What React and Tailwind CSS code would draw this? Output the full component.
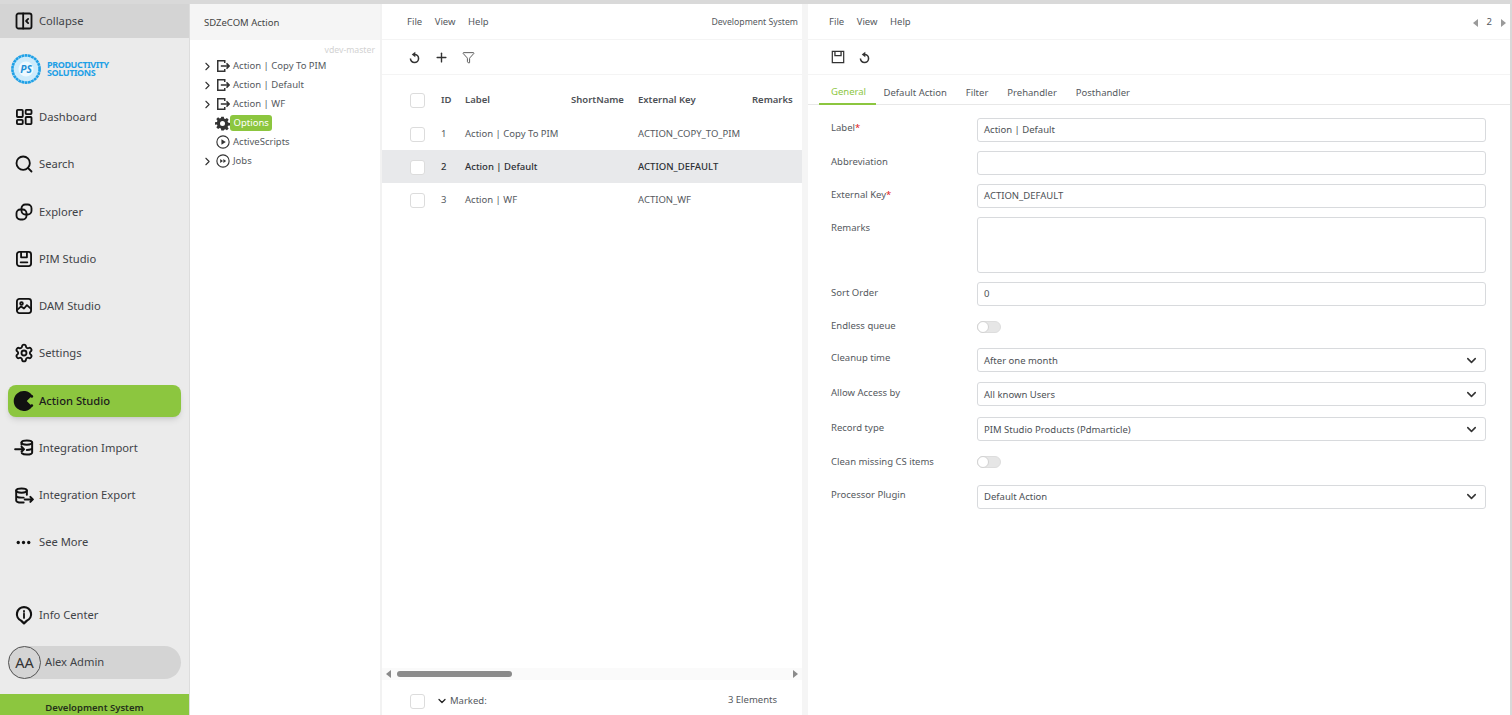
import { Search, Settings, Plus, Funnel, ChevronRight, ChevronDown } from 'lucide-react';

const Icon = ({ children, className = 'w-5 h-5' }) => (
    <svg viewBox="0 0 24 24" fill="none" stroke="currentColor" strokeWidth="2.2" strokeLinecap="round" strokeLinejoin="round" className={className}>
        {children}
    </svg>
);

const CollapseIcon = () => (
    <Icon>
        <rect x="3" y="3" width="18" height="18" rx="2.5" />
        <path d="M11 3v18M17 9.500 14.500 12l2.500 2.500" />
    </Icon>
);

const DashboardIcon = () => (
    <Icon>
        <rect x="3.500" y="3.500" width="7" height="8.500" rx="1" />
        <rect x="14" y="3.500" width="7" height="5" rx="1" />
        <rect x="3.500" y="15.500" width="7" height="5" rx="1" />
        <rect x="14" y="12" width="7" height="8.500" rx="1" />
    </Icon>
);

const ExplorerIcon = () => (
    <Icon>
        <rect x="9" y="3" width="12" height="12" rx="4.500" />
        <rect x="3" y="9" width="12" height="12" rx="4.500" />
    </Icon>
);

const PimIcon = () => (
    <Icon>
        <rect x="3.500" y="3.500" width="17" height="17" rx="3" />
        <path d="M8.500 3.500v6.500h7V3.500M8 16h8" />
    </Icon>
);

const DamIcon = () => (
    <Icon>
        <rect x="3.500" y="3.500" width="17" height="17" rx="3" />
        <circle cx="9" cy="9" r="1.600" />
        <path d="m3.500 17 5-4.500 3.500 2.500 3.500-4 5 4.500" />
    </Icon>
);

const PacmanIcon = () => (
    <svg viewBox="0 0 24 24" className="w-[22px] h-[22px]" fill="currentColor">
        <path d="M21 6A11 11 0 1 0 21 18L15 12Z" />
        <circle cx="20.500" cy="7" r="1.500" />
        <circle cx="20.500" cy="17" r="1.500" />
    </svg>
);

const ImportIcon = () => (
    <svg viewBox="0 0 28 24" fill="none" stroke="currentColor" strokeWidth="2.800" strokeLinecap="round" strokeLinejoin="round" className="w-[20px] h-[17px]">
        <ellipse cx="18" cy="5" rx="7.500" ry="3" />
        <path d="M10.500 5v3M25.500 5v14c0 1.700-3.400 3-7.500 3-3 0-5.800-.7-7-1.800M25.500 12.500c0 1.700-3.400 3-7.500 3" />
        <path d="M1.500 14.500H14M10.500 11l3.500 3.500-3.500 3.500" />
    </svg>
);

const ExportIcon = () => (
    <svg viewBox="0 0 28 24" fill="none" stroke="currentColor" strokeWidth="2.800" strokeLinecap="round" strokeLinejoin="round" className="w-[20px] h-[17px]">
        <ellipse cx="10.500" cy="5" rx="7.500" ry="3" />
        <path d="M3 5v14c0 1.700 3.400 3 7.500 3h3M18 5v6M3 12c0 1.700 3.400 3 7.500 3h3" />
        <path d="M15 17.500h11M23 14l3.500 3.500L23 21" />
    </svg>
);

const InfoIcon = () => (
    <svg viewBox="0 0 24 24" className="w-5 h-5" fill="none">
        <path d="M12 2.500a8.500 8.500 0 0 1 3.500 16.250L12 22l-3.500-3.250A8.500 8.500 0 0 1 12 2.500Z" stroke="currentColor" strokeWidth="2.600" strokeLinejoin="round" />
        <path d="M12 10.500v5M12 7v1.200" stroke="currentColor" strokeWidth="2.200" strokeLinecap="round" />
    </svg>
);

const DotsIcon = () => (
    <svg viewBox="0 0 20 6" className="w-[15px] h-[5px]" fill="currentColor">
        <circle cx="3" cy="3" r="2.200" />
        <circle cx="10" cy="3" r="2.200" />
        <circle cx="17" cy="3" r="2.200" />
    </svg>
);

const ExitBoxIcon = () => (
    <svg viewBox="0 0 16 16" fill="none" stroke="currentColor" strokeWidth="1.700" className="w-[14px] h-[14px]">
        <path d="M10 4.500V2H2v12h8v-2.500" />
        <path d="M5.500 8H15M12 5 15 8l-3 3" />
    </svg>
);

const GearIcon = () => (
    <svg viewBox="0 0 24 24" className="w-[15px] h-[15px]" fill="currentColor">
        <path fillRule="evenodd" d="M10 1h4l.6 3.100 1.900.8 2.600-1.800 2.800 2.800-1.800 2.600.8 1.900 3.100.6v4l-3.100.6-.8 1.900 1.800 2.600-2.800 2.800-2.600-1.800-1.900.8L14 23h-4l-.6-3.100-1.900-.8-2.600 1.800-2.800-2.800 1.800-2.600-.8-1.900L0 14v-4l3.100-.6.8-1.900L2.100 4.900l2.800-2.800 2.600 1.800 1.900-.8ZM12 8a4 4 0 1 0 0 8 4 4 0 0 0 0-8Z" />
    </svg>
);

const PlayCircleIcon = () => (
    <svg viewBox="0 0 16 16" className="w-[14px] h-[14px]">
        <circle cx="8" cy="8" r="7" fill="none" stroke="currentColor" strokeWidth="1.300" />
        <path d="M6.200 4.800v6.400L11.200 8Z" fill="currentColor" />
    </svg>
);

const ForwardCircleIcon = () => (
    <svg viewBox="0 0 16 16" className="w-[14px] h-[14px]">
        <circle cx="8" cy="8" r="7" fill="none" stroke="currentColor" strokeWidth="1.300" />
        <path d="M4.800 5.800v4.400L8 8ZM8.400 5.800v4.400L11.600 8Z" fill="currentColor" />
    </svg>
);

const SaveIcon = () => (
    <svg viewBox="0 0 16 16" fill="none" stroke="currentColor" strokeWidth="1.400" className="w-[14px] h-[14px]">
        <path d="M1.500 1.500h13v13h-13Z" />
        <path d="M4.500 1.500v5h7v-5" strokeWidth="1.500" />
    </svg>
);

const ReloadIcon = () => (
    <svg viewBox="0 0 16 16" className="w-[13px] h-[13px] text-[#333333]">
        <path d="M8 4.200a5 5 0 1 1-5 5" fill="none" stroke="currentColor" strokeWidth="1.900" />
        <path d="M9 .800 4.600 4.200 9 7.600Z" fill="currentColor" />
    </svg>
);

const Logo = () => (
    <div className="flex items-center h-[55.500px] pl-[11px] pt-[7px]">
        <svg viewBox="0 0 32 32" className="w-[30px] h-[30px]">
            <circle cx="16" cy="16" r="14.500" fill="#cdebfb" stroke="#1ea0e6" strokeWidth="2.800" strokeDasharray="3 0.500" />
            <circle cx="16" cy="16" r="8" fill="#eef9ff" />
            <text x="16" y="20" textAnchor="middle" fontSize="11" fontStyle="italic" fontWeight="700" fill="#1e90d6" fontFamily="Noto Sans, sans-serif">PS</text>
        </svg>
        <div className="ml-[6px] text-[9px] leading-[8px] font-bold text-[#1ea0e6] tracking-[-0.4px]">
            <div>PRODUCTIVITY</div>
            <div>SOLUTIONS</div>
        </div>
    </div>
);

const navItems = [
    { label: 'Dashboard', icon: <DashboardIcon /> },
    { label: 'Search', icon: <Search className="w-5 h-5" strokeWidth={2.200} /> },
    { label: 'Explorer', icon: <ExplorerIcon /> },
    { label: 'PIM Studio', icon: <PimIcon /> },
    { label: 'DAM Studio', icon: <DamIcon /> },
    { label: 'Settings', icon: <Settings className="w-5 h-5" strokeWidth={2.200} /> },
    { label: 'Action Studio', icon: <PacmanIcon />, active: true },
    { label: 'Integration Import', icon: <ImportIcon /> },
    { label: 'Integration Export', icon: <ExportIcon /> },
    { label: 'See More', icon: <DotsIcon /> },
];

const NavRow = ({ label, icon, active }) => (
    <div className="h-[47.25px] flex items-center px-2">
        <div className={`flex items-center w-full h-[32px] rounded-lg ${active ? 'bg-[#8cc63f] shadow-md font-medium text-[#1c1c1c]' : 'text-[#3f4347]'}`}>
            <span className="w-[31px] flex justify-center text-[#111111]">{icon}</span>
            <span className="pt-[1px]">{label}</span>
        </div>
    </div>
);

function Sidebar() {
    return (
        <div className="w-[190px] shrink-0 flex flex-col bg-[#ebebeb] border-r border-[#dddddd] text-[11.2px]">
            <div className="h-[34px] shrink-0 flex items-center px-2 bg-[#d4d4d4] text-[#3f4347]">
                <span className="w-[31px] flex justify-center text-[#111111]"><CollapseIcon /></span>
                <span className="pt-[1px]">Collapse</span>
            </div>
            <Logo />
            {navItems.map((item) => (
                <NavRow key={item.label} {...item} />
            ))}
            <div className="flex-1" />
            <NavRow label="Info Center" icon={<InfoIcon />} />
            <div className="px-2 mt-[7px]">
                <div className="flex items-center h-[33px] rounded-full bg-[#d4d4d4] text-[#3f4347]">
                    <span className="w-[33px] h-[33px] mr-[4px] rounded-full border border-[#555555] flex items-center justify-center text-[14.500px] text-[#333333]">AA</span>
                    <span>Alex Admin</span>
                </div>
            </div>
            <div className="h-[21px] mt-[15px] shrink-0 bg-[#8cc63f] flex items-center justify-center text-[9.500px] font-semibold text-[#24301a] pt-[7px]">
                Development System
            </div>
        </div>
    );
}

const treeItems = [
    { label: 'Action | Copy To PIM', icon: <ExitBoxIcon />, arrow: true },
    { label: 'Action | Default', icon: <ExitBoxIcon />, arrow: true },
    { label: 'Action | WF', icon: <ExitBoxIcon />, arrow: true },
    { label: 'Options', icon: <GearIcon />, selected: true },
    { label: 'ActiveScripts', icon: <PlayCircleIcon /> },
    { label: 'Jobs', icon: <ForwardCircleIcon />, arrow: true },
];

function TreePanel() {
    return (
        <div className="w-[190px] shrink-0 flex flex-col bg-white text-[9.500px] text-[#55595e]">
            <div className="h-[36px] shrink-0 flex items-center pl-[14px] pt-[2px] bg-[#f5f5f5] text-[#444444]">SDZeCOM Action</div>
            <div className="h-[11.500px] mt-[5px] pr-[5px] leading-[11.500px] text-right text-[8.700px] text-[#d2d2d2]">vdev-master</div>
            <div className="pl-[12px]">
                {treeItems.map((item) => (
                    <div key={item.label} className="h-[19px] flex items-center">
                        <span className="w-[11px] flex justify-center text-[#333333]">
                            {item.arrow && <ChevronRight className="w-[13px] h-[13px] shrink-0" strokeWidth={2} />}
                        </span>
                        <span className="w-[15px] ml-[2px] flex justify-center text-[#333333]">{item.icon}</span>
                        {item.selected ? (
                            <span className="px-[3.500px] h-[16px] flex items-center rounded-[3px] bg-[#8cc63f] text-white">{item.label}</span>
                        ) : (
                            <span className="ml-[3px]">{item.label}</span>
                        )}
                    </div>
                ))}
            </div>
        </div>
    );
}

const Checkbox = () => <span className="block w-[15px] h-[15px] rounded-[3px] border border-[#dcdcdc] bg-white" />;

const MenuBar = ({ right, inset = 'pl-[25px]' }) => (
    <div className={`h-[36px] shrink-0 flex items-center justify-between pt-[2px] pr-[4px] border-b border-[#f4f4f4] text-[#55595e] ${inset}`}>
        <div className="flex gap-[12.500px]">
            <span>File</span>
            <span>View</span>
            <span>Help</span>
        </div>
        {right}
    </div>
);

const rows = [
    { id: 1, label: 'Action | Copy To PIM', key: 'ACTION_COPY_TO_PIM' },
    { id: 2, label: 'Action | Default', key: 'ACTION_DEFAULT', selected: true },
    { id: 3, label: 'Action | WF', key: 'ACTION_WF' },
];

function TablePanel() {
    return (
        <div className="w-[420px] shrink-0 flex flex-col bg-white text-[9.500px] text-[#55595e]">
            <MenuBar right={<span className="text-[8.700px]">Development System</span>} />
            <div className="h-[35px] shrink-0 flex items-center gap-[13px] pl-[26px] pt-[1px] border-b border-[#f4f4f4] text-[#333333]">
                <ReloadIcon />
                <Plus className="w-[15px] h-[15px]" strokeWidth={2.200} />
                <Funnel className="w-[13px] h-[13px] text-[#444444]" strokeWidth={1.600} />
            </div>
            <div className="h-[42px] shrink-0 flex items-center pt-[9px] font-semibold text-[#4d5156]">
                <span className="w-[59px] pl-[28px]"><Checkbox /></span>
                <span className="w-[24px]">ID</span>
                <span className="w-[106px]">Label</span>
                <span className="w-[67px]">ShortName</span>
                <span className="w-[114px]">External Key</span>
                <span>Remarks</span>
            </div>
            <div className="flex-1">
                {rows.map((row) => (
                    <div key={row.id} className={`h-[33px] flex items-center pt-[1px] ${row.selected ? 'bg-[#e8e9eb] text-[#2c2f33] font-medium' : ''}`}>
                        <span className="w-[59px] pl-[28px]"><Checkbox /></span>
                        <span className="w-[24px]">{row.id}</span>
                        <span className="w-[173px]">{row.label}</span>
                        <span>{row.key}</span>
                    </div>
                ))}
            </div>
            <div className="h-[12px] shrink-0 flex items-center px-[4px] bg-[#fafafa]">
                <span className="w-0 h-0 border-y-[4px] border-y-transparent border-r-[5px] border-r-[#8a8a8a]" />
                <span className="w-[115px] h-[6px] ml-[6px] rounded-full bg-[#8a8a8a]" />
                <span className="w-0 h-0 ml-auto border-y-[4px] border-y-transparent border-l-[5px] border-l-[#8a8a8a]" />
            </div>
            <div className="h-[35px] shrink-0 flex items-center pt-[7px] pl-[28px] pr-[25px]">
                <Checkbox />
                <ChevronDown className="w-[12px] h-[12px] ml-[11px] text-[#222222]" strokeWidth={2.500} />
                <span className="ml-[2px]">Marked:</span>
                <span className="ml-auto -mt-[2px]">3 Elements</span>
            </div>
        </div>
    );
}

const Field = ({ label, required, children, labelClass = '', className = '' }) => (
    <div className={`flex ${className}`}>
        <div className={`w-[146px] shrink-0 text-[#55595e] ${labelClass}`}>
            {label}
            {required && <span className="text-[#e02020]">*</span>}
        </div>
        <div className="w-[509px]">{children}</div>
    </div>
);

const TextInput = ({ value = '' }) => (
    <div className="h-[24px] flex items-center px-[6px] pt-[1px] rounded-[3px] border border-[#d8dadd] bg-white text-[#4d5156]">{value}</div>
);

const SelectInput = ({ value }) => (
    <div className="h-[24px] flex items-center justify-between pl-[6px] pr-[6px] rounded-[3px] border border-[#d8dadd] bg-white text-[#4d5156]">
        <span className="pt-[1px]">{value}</span>
        <ChevronDown className="w-[15px] h-[15px] text-[#333333]" strokeWidth={2.400} />
    </div>
);

const Toggle = () => (
    <div className="relative w-[24px] h-[12px] rounded-full bg-[#e6e6e6] border border-[#dddddd]">
        <span className="absolute -left-px -top-px w-[12px] h-[12px] rounded-full bg-white border border-[#d2d2d2]" />
    </div>
);

const tabs = ['General', 'Default Action', 'Filter', 'Prehandler', 'Posthandler'];

function DetailPanel() {
    return (
        <div className="flex-1 min-w-0 flex flex-col bg-white text-[9.500px] border-r-2 border-[#d8d8d8]">
            <MenuBar
                inset="pl-[21px]"
                right={
                    <div className="flex items-center gap-[9px] text-[#55595e]">
                        <span className="w-0 h-0 border-y-[4px] border-y-transparent border-r-[5px] border-r-[#9a9a9a]" />
                        <span>2</span>
                        <span className="w-0 h-0 border-y-[4px] border-y-transparent border-l-[5px] border-l-[#9a9a9a]" />
                    </div>
                }
            />
            <div className="h-[35px] shrink-0 flex items-center gap-[13px] pl-[23px] border-b border-[#f4f4f4] text-[#333333]">
                <SaveIcon />
                <ReloadIcon />
            </div>
            <div className="h-[30px] shrink-0 flex items-stretch pl-[11px] pt-[7px] border-b border-[#e8e8e8] text-[#55595e]">
                {tabs.map((tab, index) => (
                    <span
                        key={tab}
                        className={`flex items-center -mb-px ${index === 0 ? 'pl-[12px] pr-[10px] -mr-[2px] text-[#8cc63f] border-b-2 border-[#8cc63f]' : 'px-[9.500px]'}`}
                    >
                        {tab}
                    </span>
                ))}
            </div>
            <div className="flex flex-col gap-[9px] pl-[23px] pt-[12.500px]">
                <Field label="Label" required labelClass="pt-[3.500px]"><TextInput value="Action | Default" /></Field>
                <Field label="Abbreviation" labelClass="pt-[4.500px]"><TextInput /></Field>
                <Field label="External Key" required labelClass="pt-[4.500px]"><TextInput value="ACTION_DEFAULT" /></Field>
                <Field label="Remarks" labelClass="pt-[4.500px]">
                    <div className="h-[56px] rounded-[3px] border border-[#d8dadd]" />
                </Field>
                <Field label="Sort Order" labelClass="pt-[4.500px]"><TextInput value="0" /></Field>
                <Field label="Endless queue" labelClass="-mt-[1.500px]" className="py-[6px]"><Toggle /></Field>
                <Field label="Cleanup time" labelClass="pt-[2.500px]" className="mb-[1px]"><SelectInput value="After one month" /></Field>
                <Field label="Allow Access by" labelClass="pt-[3.500px]" className="mb-[2px]"><SelectInput value="All known Users" /></Field>
                <Field label="Record type" labelClass="pt-[3.500px]"><SelectInput value="PIM Studio Products (Pdmarticle)" /></Field>
                <Field label="Clean missing CS items" labelClass="-mt-[1px]" className="py-[6px]"><Toggle /></Field>
                <Field label="Processor Plugin" labelClass="pt-[3.500px]"><SelectInput value="Default Action" /></Field>
            </div>
        </div>
    );
}

export default function App() {
    return (
        <div className="h-[715px] w-[1512px] overflow-hidden flex flex-col bg-white font-['Noto_Sans',sans-serif]">
            <div className="h-[4px] shrink-0 bg-[#d9d9d9]" />
            <div className="flex flex-1 min-h-0">
                <Sidebar />
                <TreePanel />
                <div className="w-[2px] shrink-0 bg-[#f2f2f2]" />
                <TablePanel />
                <div className="w-[6px] shrink-0 bg-[#f5f5f5]" />
                <DetailPanel />
            </div>
        </div>
    );
}
